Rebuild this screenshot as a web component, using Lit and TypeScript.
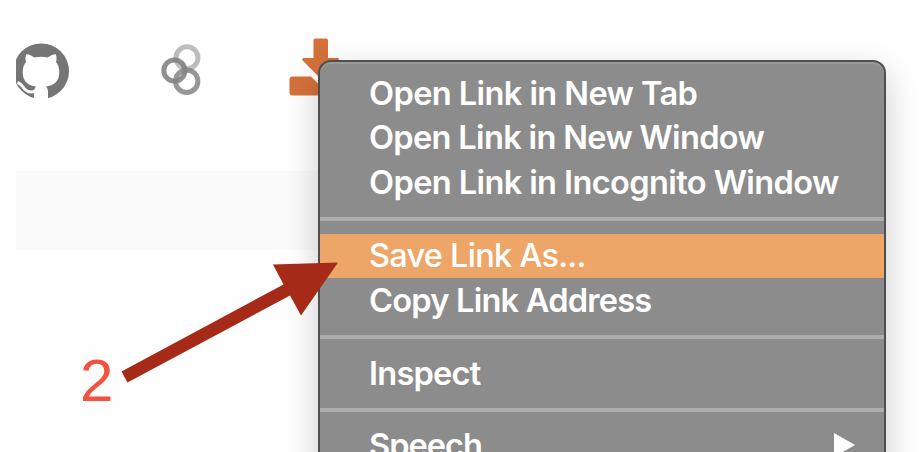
import { LitElement, html, css } from "lit";
import { customElement, property } from "lit/decorators.js";
import { classMap } from "lit/directives/class-map.js";

interface Entry {
  label: string;
  tracking: number;
  selected?: boolean;
  submenu?: boolean;
}

const GROUPS: Entry[][] = [
  [
    { label: "Open Link in New Tab", tracking: -0.6 },
    { label: "Open Link in New Window", tracking: -0.68 },
    { label: "Open Link in Incognito Window", tracking: -0.62 },
  ],
  [
    { label: "Save Link As...", tracking: -0.78, selected: true },
    { label: "Copy Link Address", tracking: -0.78 },
  ],
  [{ label: "Inspect", tracking: -0.77 }],
  [{ label: "Speech", tracking: -1, submenu: true }],
];

@customElement("context-menu")
export class ContextMenu extends LitElement {
  @property({ attribute: false }) groups: Entry[][] = [];

  static styles = css`
    :host {
      display: block;
      box-sizing: border-box;
      border: 2px solid #4e4e4e;
      border-radius: 13px;
      background: #8c8c8c;
      box-shadow: inset 0 2px 0 #9b9b9b, 0 12px 32px rgba(0, 0, 0, 0.2);
      padding-top: 9.5px;
      overflow: hidden;
      font-family: Inter, "Liberation Sans", sans-serif;
    }
    .group + .group::before {
      content: "";
      display: block;
      height: 4px;
      margin: 12.2px 0;
      background: #acadad;
    }
    .item {
      display: flex;
      align-items: center;
      justify-content: space-between;
      box-sizing: border-box;
      height: 44.6px;
      padding: 0 29px 2px 49px;
      color: #fff;
      font-size: 32.6px;
      line-height: 42px;
      font-weight: 600;
      white-space: nowrap;
    }
    .selected {
      background: #eea668;
      font-weight: 500;
    }
    .chevron {
      width: 21px;
      height: 24px;
      fill: #fff;
    }
  `;

  render() {
    return this.groups.map(
      (group) => html`<div class="group">
        ${group.map(
          (e) => html`<div class=${classMap({ item: true, selected: !!e.selected })}>
            <span style="letter-spacing:${e.tracking}px">${e.label}</span>
            ${e.submenu
              ? html`<svg class="chevron" viewBox="0 0 21 24"><path d="M0 0 21 12 0 24Z" /></svg>`
              : null}
          </div>`
        )}
      </div>`
    );
  }
}

@customElement("app-root")
export class AppRoot extends LitElement {
  static styles = css`
    :host {
      display: block;
      position: relative;
      width: 922px;
      height: 452px;
      overflow: hidden;
      background: #fefefe;
    }
    .page {
      padding-left: 16px;
    }
    .toolbar {
      display: flex;
      align-items: flex-start;
      height: 132.5px;
      padding-top: 38px;
    }
    .toolbar svg {
      flex: none;
      display: block;
    }
    .github {
      width: 54px;
      height: 58px;
      margin-top: 4px;
    }
    .disc {
      fill: #757575;
    }
    .cat {
      fill: #fefefe;
    }
    .arm {
      fill: none;
      stroke: #fefefe;
      stroke-width: 3;
    }
    .rings {
      width: 42px;
      height: 54px;
      margin: 5px 0 0 90px;
      fill: none;
      stroke-width: 5;
    }
    .download {
      width: 64px;
      height: 58px;
      margin-left: 87px;
      fill: #d4713a;
    }
    .band {
      width: 320px;
      height: 79px;
      background: #fafafa;
    }
    context-menu {
      position: absolute;
      left: 318px;
      top: 60px;
      width: 568px;
      height: 440px;
    }
    .step {
      position: absolute;
      left: 80px;
      top: 347px;
      font: 60px/68px "Liberation Sans", Arial, sans-serif;
      color: #f4513f;
    }
    .arrow {
      position: absolute;
      left: 120px;
      top: 260px;
      width: 220px;
      height: 126px;
      fill: #a52a17;
    }
  `;

  render() {
    return html`
      <div class="page">
        <div class="toolbar">
          <svg class="github" viewBox="16 42 54 58">
            <circle class="disc" cx="41.200" cy="71.200" r="27.800" />
            <path class="cat" d="M34 100V91C34.300 89 35 87.500 36 86.500 28 85.500 22.700 81.500 22.700 72 22.700 67.500 24 64.500 26 62 25.200 59.500 25.200 57 26.200 54.200 29.500 54.200 32 56 34.500 57.500 38.500 56.500 43.500 56.500 47.500 57.500 50 56 52.500 54.200 55.800 54.200 56.800 57 56.800 59.500 56 62 58 64.500 59.300 67.500 59.300 72 59.300 81.500 54 85.500 46 86.500 47.500 88 48 90 48 92V100Z" />
            <path class="arm" d="M17.500 82.500C21.500 83.500 22.500 87 25 89.500 27.500 92 31 92.300 35 91.500" />
          </svg>
          <svg class="rings" viewBox="160 43 42 54">
            <circle cx="187" cy="57.7" r="11" stroke="#bdbdbd" />
            <circle cx="174.4" cy="70.6" r="10.6" stroke="#7d7d7d" stroke-opacity=".85" />
            <circle cx="186.700" cy="81.200" r="11.2" stroke="#858585" stroke-opacity=".85" />
          </svg>
          <svg class="download" viewBox="289 38 64 58">
            <path d="M315.500 38.500H326a2 2 0 0 1 2 2V58H337.500a1.500 1.500 0 0 1 1 2.600L322.500 77a2.500 2.500 0 0 1-3.500 0L302.700 60.600A1.500 1.500 0 0 1 303.500 58H313.500V40.500a2 2 0 0 1 2-2Z" />
            <path d="M292.500 76.500H311L317 82.500Q321 86 325 82.500L331 76.500H349a3 3 0 0 1 3 3V92.500a3 3 0 0 1-3 3H292.500a3 3 0 0 1-3-3V79.500a3 3 0 0 1 3-3Z" />
          </svg>
        </div>
        <div class="band"></div>
      </div>
      <context-menu .groups=${GROUPS}></context-menu>
      <div class="step">2</div>
      <svg class="arrow" viewBox="120 260 220 126">
        <path d="M121.500 371.500 283.500 284.500 273 264.500 338 262.500 301 315.500 290 295.500 127.500 382.500Z" />
      </svg>
    `;
  }
}
